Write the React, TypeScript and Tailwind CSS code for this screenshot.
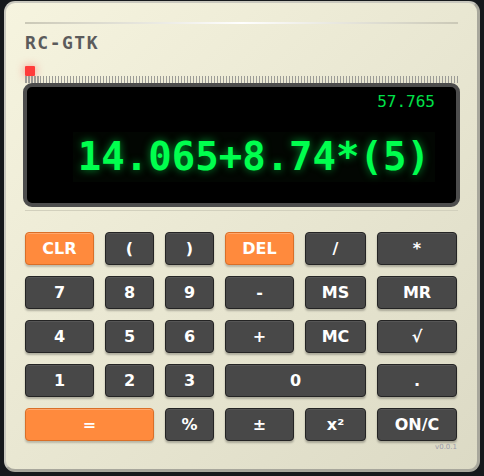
const KEYS: { label: string; orange?: boolean; span?: string }[] = [
  { label: 'CLR', orange: true },
  { label: '(' },
  { label: ')' },
  { label: 'DEL', orange: true },
  { label: '/' },
  { label: '*' },
  { label: '7' },
  { label: '8' },
  { label: '9' },
  { label: '-' },
  { label: 'MS' },
  { label: 'MR' },
  { label: '4' },
  { label: '5' },
  { label: '6' },
  { label: '+' },
  { label: 'MC' },
  { label: '√' },
  { label: '1' },
  { label: '2' },
  { label: '3' },
  { label: '0', span: 'col-span-2' },
  { label: '.' },
  { label: '=', orange: true, span: 'col-span-2' },
  { label: '%' },
  { label: '±' },
  { label: 'x²' },
  { label: 'ON/C' },
]

function Key({ label, orange, span }: { label: string; orange?: boolean; span?: string }) {
  const base =
    'h-[33px] rounded-[4px] border flex items-center justify-center text-white font-bold text-[16px] font-["DejaVu_Sans",sans-serif]'
  const tone = orange
    ? 'bg-[#ff8a3d] border-[#d96f28] shadow-[inset_0_1px_0_rgba(255,255,255,0.25),0_2px_2px_rgba(0,0,0,0.2)]'
    : 'bg-[#484848] border-[#242424] shadow-[inset_0_1px_0_rgba(255,255,255,0.08),0_2px_2px_rgba(0,0,0,0.25)]'
  return <button className={`${base} ${tone} ${span ?? ''}`}>{label}</button>
}

export default function App() {
  return (
    <div className="w-[484px] h-[476px] bg-[#16191c] pt-[1px] px-[4px]">
      <div className="h-[471px] rounded-[11px] border-2 border-[#c9c8be] border-r-[3px] border-b-[3px] border-r-[#a8a79c] border-b-[#a8a79c] bg-gradient-to-br from-[#f6f4df] to-[#dcdac5] pt-[19px] pl-[19px] pr-[19px] flex flex-col">
        <div className="h-[2px] bg-gradient-to-r from-[#cbc9b7] via-[#ffffff] to-[#cbc9b7]" />

        <div className="mt-[10px] text-[18px] leading-[18px] font-bold tracking-[1.5px] text-[#5b5b5b] font-['DejaVu_Sans_Mono',monospace]">
          RC-GTK
        </div>

        <div className="mt-[14px] w-[10px] h-[10px] rounded-[1px] bg-[#ff3b3b] shadow-[0_0_8px_rgba(255,70,70,0.6)]" />
        <div className="h-[7px] bg-[repeating-linear-gradient(90deg,#9b9b96_0px,#9b9b96_1.5px,transparent_1.5px,transparent_3px)]" />

        <div className="-mx-[2px] h-[124px] rounded-[9px] border-4 border-[#4d4d4d] bg-black pt-[7px] pr-[21px] flex flex-col items-end">
          <div className="text-[16px] leading-[16px] text-[#00e04a] font-['DejaVu_Sans_Mono',monospace]">
            57.765
          </div>
          <div className="mt-[22px] h-[50px] px-[5px] bg-[#020602] text-[39px] leading-[50px] font-bold text-[#00ff4e] font-['DejaVu_Sans_Mono',monospace] [text-shadow:0_0_8px_rgba(0,255,80,0.55)]">
            14.065+8.74*(5)
          </div>
        </div>

        <div className="mt-[3px] h-[1px] bg-[#d2d0bd]" />

        <div className="mt-[21px] grid grid-cols-[69px_49px_49px_69px_61px_80px] gap-x-[11px] gap-y-[11px]">
          {KEYS.map((k) => (
            <Key key={k.label} {...k} />
          ))}
        </div>

        <div className="mt-[2px] text-right pr-[1px] text-[7px] leading-[8px] text-[#9a9aa8] font-['DejaVu_Sans',sans-serif]">
          v0.0.1
        </div>
      </div>
    </div>
  )
}
